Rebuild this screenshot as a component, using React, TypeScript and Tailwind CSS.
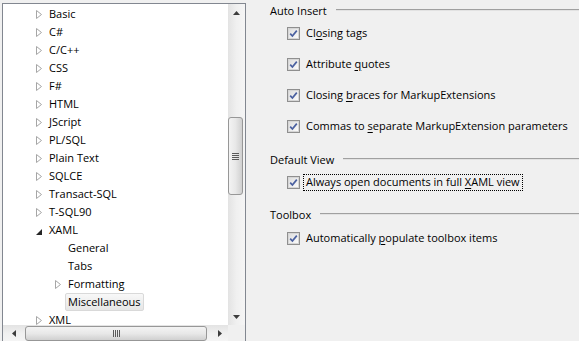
import React from 'react';

type TreeNode = {
  label: string;
  level: 1 | 2;
  state?: 'closed' | 'open';
  selected?: boolean;
};

const nodes: TreeNode[] = [
  { label: 'Basic', level: 1, state: 'closed' },
  { label: 'C#', level: 1, state: 'closed' },
  { label: 'C/C++', level: 1, state: 'closed' },
  { label: 'CSS', level: 1, state: 'closed' },
  { label: 'F#', level: 1, state: 'closed' },
  { label: 'HTML', level: 1, state: 'closed' },
  { label: 'JScript', level: 1, state: 'closed' },
  { label: 'PL/SQL', level: 1, state: 'closed' },
  { label: 'Plain Text', level: 1, state: 'closed' },
  { label: 'SQLCE', level: 1, state: 'closed' },
  { label: 'Transact-SQL', level: 1, state: 'closed' },
  { label: 'T-SQL90', level: 1, state: 'closed' },
  { label: 'XAML', level: 1, state: 'open' },
  { label: 'General', level: 2 },
  { label: 'Tabs', level: 2 },
  { label: 'Formatting', level: 2, state: 'closed' },
  { label: 'Miscellaneous', level: 2, selected: true },
  { label: 'XML', level: 1, state: 'closed' },
];

const Collapsed = () => (
  <svg width="6" height="9" viewBox="0 0 6 9" className="mt-px">
    <path d="M0.5 0.5 L5.5 4.5 L0.5 8.5 Z" fill="#fff" stroke="#a6a6a6" />
  </svg>
);

const Expanded = () => (
  <svg width="6" height="6" viewBox="0 0 6 6" className="mt-[3px]">
    <path d="M6 0 L6 6 L0 6 Z" fill="#262626" />
  </svg>
);

const Arrow: React.FC<{ dir: 'up' | 'down' | 'left' | 'right' }> = ({ dir }) => {
  const d = {
    up: 'M0 4 L3.5 0 L7 4 Z',
    down: 'M0 0 L7 0 L3.5 4 Z',
    left: 'M4 0 L4 7 L0 3.5 Z',
    right: 'M0 0 L4 3.5 L0 7 Z',
  }[dir];
  const vertical = dir === 'up' || dir === 'down';
  return (
    <svg width={vertical ? 7 : 4} height={vertical ? 4 : 7} viewBox={vertical ? '0 0 7 4' : '0 0 4 7'}>
      <path d={d} fill="#3c3c3c" />
    </svg>
  );
};

const TreeRow: React.FC<{ node: TreeNode }> = ({ node }) => (
  <div className="h-[18px] flex items-center shrink-0">
    <div className={node.level === 1 ? 'w-[31px] shrink-0' : 'w-[50px] shrink-0'} />
    <div className="w-[12px] h-full flex items-center pl-[2px] shrink-0">
      {node.state === 'closed' && <Collapsed />}
      {node.state === 'open' && <Expanded />}
    </div>
    <span
      className={
        node.selected
          ? 'h-[18px] flex items-center px-[2px] border border-[#d9d9d9] rounded-[2px] bg-gradient-to-b from-[#f8f8f8] to-[#e6e6e6] whitespace-nowrap'
          : 'h-[18px] flex items-center px-[2px] border border-transparent whitespace-nowrap'
      }
    >
      {node.label}
    </span>
  </div>
);

const CheckBox = () => (
  <span className="w-[13px] h-[13px] shrink-0 border border-[#8f8f8f] bg-[#f4f4f4] flex items-center justify-center">
    <span className="w-[11px] h-[11px] border border-[#d6d6d6] bg-gradient-to-br from-[#dedede] to-[#fbfbfb] flex items-center justify-center">
      <svg width="9" height="9" viewBox="0 0 9 9">
        <path d="M1.2 4.6 L3.4 7 L7.8 1.6" fill="none" stroke="#4a60a0" strokeWidth="1.7" />
      </svg>
    </span>
  </span>
);

const Option: React.FC<{ children: React.ReactNode; focused?: boolean; className?: string }> = ({
  children,
  focused,
  className,
}) => (
  <div className={'h-[16px] flex items-center pl-[17px] ' + (className ?? '')}>
    <CheckBox />
    <span
      className={
        focused
          ? 'ml-[3px] h-[17px] flex items-center px-[2px] border border-dotted border-black whitespace-nowrap'
          : 'ml-[3px] h-[17px] flex items-center px-[2px] border border-transparent whitespace-nowrap'
      }
    >
      <span>{children}</span>
    </span>
  </div>
);

const Header: React.FC<{ title: string; className?: string }> = ({ title, className }) => (
  <div className={'h-[16px] flex items-center ' + (className ?? '')}>
    <span className="whitespace-nowrap">{title}</span>
    <div className="flex-1 ml-[9px] -mt-[2px] border-t border-[#a0a0a0] h-[2px] bg-[#e2e2e2]" />
  </div>
);

const Key: React.FC<{ children: React.ReactNode }> = ({ children }) => (
  <u className="underline underline-offset-2">{children}</u>
);

export default function App() {
  return (
    <div className="w-[579px] h-[341px] overflow-hidden bg-[#f0f0f0] flex text-[11px] text-black font-['Open_Sans','Noto_Sans',sans-serif]">
      {/* tree panel */}
      <div className="ml-[2px] mt-[3px] w-[244px] h-[340px] shrink-0 border border-[#828790] bg-white flex flex-col">
        <div className="flex h-[321px]">
          <div className="flex-1 pt-px flex flex-col overflow-hidden">
            {nodes.map(n => (
              <TreeRow key={n.label} node={n} />
            ))}
          </div>
          {/* vertical scrollbar */}
          <div className="w-[17px] shrink-0 flex flex-col bg-gradient-to-r from-[#e3e3e3] via-[#f0f0f0] to-[#f5f5f5]">
            <div className="h-[17px] flex items-center justify-center">
              <Arrow dir="up" />
            </div>
            <div className="flex-1">
              <div className="mt-[96px] ml-0 w-[15px] h-[78px] border border-[#979797] rounded-[3px] bg-gradient-to-r from-[#f3f3f3] via-[#e8e8e8] to-[#d0d0d0] flex flex-col items-center justify-center gap-px">
                <div className="w-[7px] h-px bg-[#5a5a5a]" />
                <div className="w-[7px] h-px bg-[#5a5a5a]" />
                <div className="w-[7px] h-px bg-[#5a5a5a]" />
                <div className="w-[7px] h-px bg-[#5a5a5a]" />
              </div>
            </div>
            <div className="h-[17px] flex items-center justify-center">
              <Arrow dir="down" />
            </div>
          </div>
        </div>
        {/* horizontal scrollbar */}
        <div className="flex h-[17px] shrink-0">
          <div className="flex-1 flex bg-gradient-to-b from-[#e3e3e3] via-[#f0f0f0] to-[#f5f5f5]">
            <div className="w-[17px] flex items-center justify-center pl-[4px]">
              <Arrow dir="left" />
            </div>
            <div className="flex-1 flex items-center">
              <div className="ml-[5px] w-[182px] h-[15px] border border-[#979797] rounded-[3px] bg-gradient-to-b from-[#f3f3f3] via-[#e8e8e8] to-[#d0d0d0] flex items-center justify-center gap-px">
                <div className="w-px h-[7px] bg-[#5a5a5a]" />
                <div className="w-px h-[7px] bg-[#5a5a5a]" />
                <div className="w-px h-[7px] bg-[#5a5a5a]" />
                <div className="w-px h-[7px] bg-[#5a5a5a]" />
              </div>
            </div>
            <div className="w-[17px] flex items-center justify-center">
              <Arrow dir="right" />
            </div>
          </div>
          <div className="w-[17px] bg-[#f0f0f0]" />
        </div>
      </div>

      {/* options panel */}
      <div className="flex-1 pl-[24px] pt-[3px] flex flex-col">
        <Header title="Auto Insert" />
        <Option className="mt-[6px]">
          Cl<Key>o</Key>sing tags
        </Option>
        <Option className="mt-[15px]">
          Attribute <Key>q</Key>uotes
        </Option>
        <Option className="mt-[15px]">
          Closing <Key>b</Key>races for MarkupExtensions
        </Option>
        <Option className="mt-[15px]">
          Commas to <Key>s</Key>eparate MarkupExtension parameters
        </Option>
        <Header title="Default View" className="mt-[18px]" />
        <Option className="mt-[6px]" focused>
          Always open documents in full <Key>X</Key>AML view
        </Option>
        <Header title="Toolbox" className="mt-[17px]" />
        <Option className="mt-[7px]">
          Automatically <Key>p</Key>opulate toolbox items
        </Option>
      </div>
    </div>
  );
}
